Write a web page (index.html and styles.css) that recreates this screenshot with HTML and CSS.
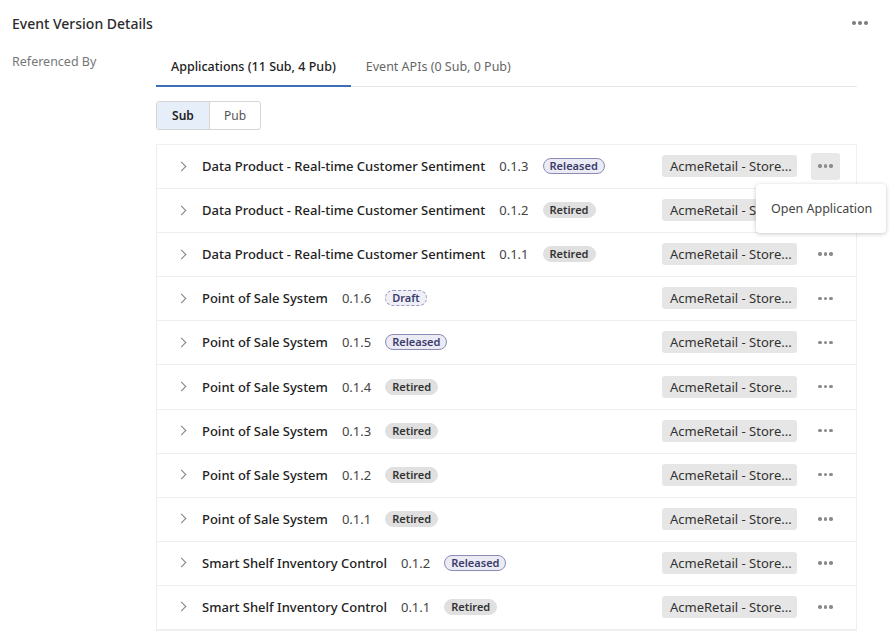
FILE: index.html
```html
<!DOCTYPE html>
<html>
<head>
<meta charset="utf-8">
<link rel="stylesheet" href="styles.css">
</head>
<body>
<div class="page">
  <div class="header">
    <h1 class="title">Event Version Details</h1>
    <span class="hdots"><i></i><i></i><i></i></span>
  </div>
  <div class="section">
    <div class="label">Referenced By</div>
    <div class="content">
      <div class="tabs">
        <div class="tab active">Applications (11 Sub, 4 Pub)</div>
        <div class="tab">Event APIs (0 Sub, 0 Pub)</div>
      </div>
      <div class="toggle">
        <div class="seg on">Sub</div>
        <div class="seg">Pub</div>
      </div>
      <div class="list">
        <div class="row"><span class="chev"></span><span class="name">Data Product - Real-time Customer Sentiment</span><span class="ver">0.1.3</span><span class="badge released">Released</span><span class="app">AcmeRetail - Store...</span><span class="more active"><i></i><i></i><i></i></span></div>
        <div class="row"><span class="chev"></span><span class="name">Data Product - Real-time Customer Sentiment</span><span class="ver">0.1.2</span><span class="badge retired">Retired</span><span class="app">AcmeRetail - Store...</span><span class="more"><i></i><i></i><i></i></span></div>
        <div class="row"><span class="chev"></span><span class="name">Data Product - Real-time Customer Sentiment</span><span class="ver">0.1.1</span><span class="badge retired">Retired</span><span class="app">AcmeRetail - Store...</span><span class="more"><i></i><i></i><i></i></span></div>
        <div class="row"><span class="chev"></span><span class="name">Point of Sale System</span><span class="ver">0.1.6</span><span class="badge draft">Draft</span><span class="app">AcmeRetail - Store...</span><span class="more"><i></i><i></i><i></i></span></div>
        <div class="row"><span class="chev"></span><span class="name">Point of Sale System</span><span class="ver">0.1.5</span><span class="badge released">Released</span><span class="app">AcmeRetail - Store...</span><span class="more"><i></i><i></i><i></i></span></div>
        <div class="row"><span class="chev"></span><span class="name">Point of Sale System</span><span class="ver">0.1.4</span><span class="badge retired">Retired</span><span class="app">AcmeRetail - Store...</span><span class="more"><i></i><i></i><i></i></span></div>
        <div class="row"><span class="chev"></span><span class="name">Point of Sale System</span><span class="ver">0.1.3</span><span class="badge retired">Retired</span><span class="app">AcmeRetail - Store...</span><span class="more"><i></i><i></i><i></i></span></div>
        <div class="row"><span class="chev"></span><span class="name">Point of Sale System</span><span class="ver">0.1.2</span><span class="badge retired">Retired</span><span class="app">AcmeRetail - Store...</span><span class="more"><i></i><i></i><i></i></span></div>
        <div class="row"><span class="chev"></span><span class="name">Point of Sale System</span><span class="ver">0.1.1</span><span class="badge retired">Retired</span><span class="app">AcmeRetail - Store...</span><span class="more"><i></i><i></i><i></i></span></div>
        <div class="row"><span class="chev"></span><span class="name">Smart Shelf Inventory Control</span><span class="ver">0.1.2</span><span class="badge released">Released</span><span class="app">AcmeRetail - Store...</span><span class="more"><i></i><i></i><i></i></span></div>
        <div class="row"><span class="chev"></span><span class="name">Smart Shelf Inventory Control</span><span class="ver">0.1.1</span><span class="badge retired">Retired</span><span class="app">AcmeRetail - Store...</span><span class="more"><i></i><i></i><i></i></span></div>
        <div class="menu"><div class="menu-item">Open Application</div></div>
      </div>
    </div>
  </div>
</div>
</body>
</html>
```

FILE: styles.css
```css
* { box-sizing: border-box; }
html, body { margin: 0; padding: 0; background: #fff; }
body {
  font-family: "Noto Sans", "Liberation Sans", sans-serif;
  color: #2a2a2a;
  width: 896px;
  height: 644px;
  overflow: hidden;
}
.page { padding: 12px 0 0 12px; }
.header {
  display: flex;
  align-items: center;
  justify-content: space-between;
  height: 22px;
  padding-right: 28px;
}
.title {
  margin: 0;
  font-size: 14px;
  font-weight: 500;
  color: #2b2b2b;
}
.hdots, .more {
  display: flex;
  gap: 2px;
  align-items: center;
}
.hdots i, .more i {
  display: block;
  width: 4px;
  height: 4px;
  border-radius: 50%;
  background: #7a7a7a;
}
.section {
  display: flex;
  margin-top: 16px;
}
.label {
  width: 144px;
  font-size: 12.5px;
  color: #777;
  padding-top: 3px;
}
.content { width: 701px; }
.tabs {
  display: flex;
  border-bottom: 1px solid #e6e6e6;
  height: 37px;
}
.tab {
  padding: 8px 15px 0 15px;
  font-size: 12.5px;
  color: #666;
}
.tab.active {
  color: #222;
  font-weight: 500;
  border-bottom: 2px solid #3c6fb5;
  margin-bottom: -1px;
}
.toggle {
  display: flex;
  margin-top: 14px;
  width: 105px;
  height: 29px;
  border: 1px solid #d6d6d6;
  border-radius: 3px;
  overflow: hidden;
}
.seg {
  display: flex;
  align-items: center;
  justify-content: center;
  font-size: 12px;
  color: #555;
  flex: 1;
}
.seg.on {
  background: #e6eff9;
  color: #222;
  font-weight: 600;
  border-right: 1px solid #d6d6d6;
  flex: 0 0 53px;
}
.list {
  position: relative;
  margin-top: 14px;
  border: 1px solid #efefef;
  border-top-color: #f0f0f0;
}
.row {
  display: flex;
  align-items: center;
  height: 44.1px;
  border-bottom: 1px solid #efefef;
  padding-left: 21px;
  padding-right: 16px;
  padding-bottom: 1px;
}
.row:last-of-type { border-bottom: none; }
.chev {
  width: 7px;
  height: 7px;
  border-right: 1.6px solid #808080;
  border-top: 1.6px solid #808080;
  transform: rotate(45deg);
  margin-right: 17px;
  flex: 0 0 auto;
}
.name {
  font-size: 13px;
  font-weight: 500;
  color: #222;
}
.ver {
  font-size: 13px;
  color: #444;
  margin-left: 14px;
}
.badge {
  margin-left: 14px;
  font-size: 11px;
  font-weight: 600;
  height: 16px;
  line-height: 14px;
  padding: 0 6px;
  border-radius: 8px;
}
.badge.released {
  background: #ebebf5;
  border: 1px solid #8b8bb5;
  color: #3c3c6c;
}
.badge.draft {
  background: #efeff7;
  border: 1px dashed #9797be;
  color: #3c3c6c;
}
.badge.retired {
  background: #e0e0e0;
  border: 1px solid #e0e0e0;
  color: #333;
}
.app {
  margin-left: auto;
  background: #e6e6e6;
  border-radius: 3px;
  height: 22px;
  line-height: 22px;
  width: 135px;
  padding: 0 8px;
  font-size: 13px;
  color: #333;
  white-space: nowrap;
}
.more {
  margin-left: 14px;
  width: 29px;
  height: 27px;
  justify-content: center;
  border-radius: 3px;
}
.more i { background: #8a8a8a; width: 3.5px; height: 3.5px; }
.more.active { background: #e8e8e8; }
.menu {
  position: absolute;
  left: 599px;
  top: 39px;
  width: 130px;
  background: #fff;
  border-radius: 4px;
  box-shadow: 0 1px 4px rgba(0,0,0,0.22);
  padding: 12px 0;
}
.menu-item {
  padding: 3px 15px;
  font-size: 12.5px;
  line-height: 19px;
  color: #444;
  white-space: nowrap;
}
```
